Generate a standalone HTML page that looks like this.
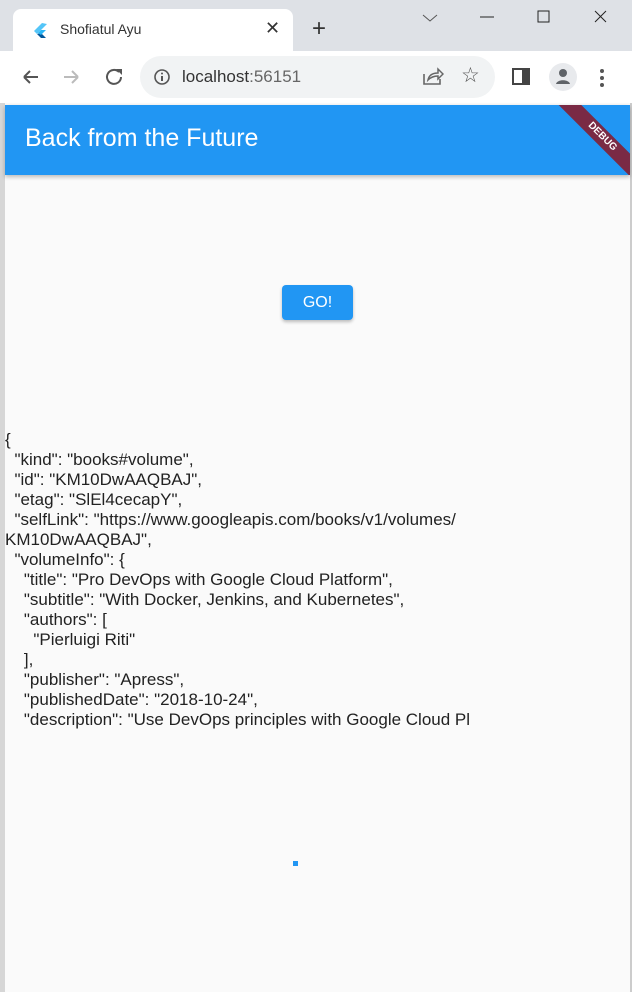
<!DOCTYPE html>
<html><head><meta charset="utf-8"><style>
*{margin:0;padding:0;box-sizing:border-box}
body{width:632px;height:992px;overflow:hidden;background:#fafafa;font-family:"Liberation Sans",sans-serif;position:relative}
.tabbar{position:absolute;left:0;top:0;width:632px;height:51px;background:#dee1e6}
.tab{position:absolute;left:13px;top:9px;width:280px;height:42px;background:#fff;border-radius:8px 8px 0 0}
.toolbar{position:absolute;left:0;top:51px;width:632px;height:52px;background:#fff}
.omni{position:absolute;left:140px;top:56px;width:355px;height:42px;background:#f1f3f4;border-radius:21px}
.appbar{position:absolute;left:5px;top:105px;width:625px;height:70px;background:#2196f3;box-shadow:0 2px 4px rgba(0,0,0,.25);overflow:hidden}
.json{position:absolute;left:5px;top:430px;font-size:17px;line-height:20px;color:#222;white-space:pre}
</style></head><body>
<div class="tabbar"></div>
<div class="tab">
 <svg style="position:absolute;left:20px;top:14px" width="14" height="16" viewBox="0 0 14 16"><path d="M9 0L1 8l3 3L14 1z" fill="#54c5f8"/><path d="M4 11l4 4h5L8 10z" fill="#01579b"/><path d="M5 10l3-3h5l-5 5z" fill="#29b6f6"/></svg>
 <div style="position:absolute;left:47px;top:12px;font-size:14px;color:#333">Shofiatul Ayu</div>
 <div style="position:absolute;left:252px;top:9px;font-size:18px;color:#333">✕</div>
</div>
<div style="position:absolute;left:312px;top:15px;font-size:24px;color:#333">+</div>
<svg style="position:absolute;left:420px;top:10px" width="200" height="20"><path d="M3 5l7 6 7-6" stroke="#555" fill="none"/><path d="M60 7h14" stroke="#222"/><rect x="118" y="1" width="11" height="11" stroke="#222" fill="none"/><path d="M175 1l11 11M186 1l-11 11" stroke="#222"/></svg>
<div class="toolbar"></div>
<svg style="position:absolute;left:20px;top:66px" width="110" height="22"><path d="M4 11h14M4 11l6-6M4 11l6 6" stroke="#555" stroke-width="2" fill="none"/><path d="M44 11h14M58 11l-6-6M58 11l-6 6" stroke="#bbb" stroke-width="2" fill="none"/><path d="M99 6a7 7 0 1 0 2 5" stroke="#555" stroke-width="2" fill="none"/><path d="M96 3h6v6z" fill="#555"/></svg>
<div class="omni"></div>
<svg style="position:absolute;left:153px;top:68px" width="18" height="18"><circle cx="9" cy="9" r="7" stroke="#555" stroke-width="1.6" fill="none"/><path d="M9 8v5" stroke="#555" stroke-width="2"/><circle cx="9" cy="5.5" r="1" fill="#555"/></svg>
<div style="position:absolute;left:182px;top:67px;font-size:17px;color:#333">localhost<span style="color:#666">:56151</span></div>
<svg style="position:absolute;left:422px;top:66px" width="22" height="20"><path d="M2 8v10h16v-5" stroke="#666" stroke-width="1.6" fill="none"/><path d="M6 14c1-5 5-7 10-7V3l5 5-5 5V10c-4 0-7 1-10 4z" stroke="#666" stroke-width="1.5" fill="none"/></svg>
<div style="position:absolute;left:461px;top:63px;font-size:21px;color:#555">☆</div>
<svg style="position:absolute;left:512px;top:68px" width="20" height="18"><rect x="1" y="1" width="16" height="15" stroke="#444" stroke-width="2" fill="none"/><rect x="10" y="1" width="7" height="15" fill="#444"/></svg>
<svg style="position:absolute;left:548px;top:62px" width="30" height="30"><circle cx="15" cy="15" r="14" fill="#e8eaed"/><circle cx="15" cy="11" r="4" fill="#5f6368"/><path d="M8 22c1-5 13-5 14 0z" fill="#5f6368"/></svg>
<svg style="position:absolute;left:598px;top:68px" width="8" height="20"><circle cx="4" cy="3" r="2" fill="#555"/><circle cx="4" cy="10" r="2" fill="#555"/><circle cx="4" cy="17" r="2" fill="#555"/></svg>
<div style="position:absolute;left:0;top:103px;width:5px;height:889px;background:#d6d6d6"></div>
<div style="position:absolute;left:630px;top:103px;width:2px;height:889px;background:#ccc"></div>
<div class="appbar">
 <div style="position:absolute;left:20px;top:19px;font-size:25px;color:#fff">Back from the Future</div>
 <div style="position:absolute;left:537px;top:24px;width:120px;height:16px;background:#7a2a45;transform:rotate(45deg);color:#fff;font-size:10px;font-weight:bold;text-align:center;line-height:16px">DEBUG</div>
</div>
<div style="position:absolute;left:282px;top:285px;width:71px;height:35px;background:#2196f3;border-radius:4px;box-shadow:0 2px 3px rgba(0,0,0,.25);color:#fff;font-size:16px;text-align:center;line-height:35px">GO!</div>
<div class="json">{
  "kind": "books#volume",
  "id": "KM10DwAAQBAJ",
  "etag": "SlEl4cecapY",
  "selfLink": "https://www.googleapis.com/books/v1/volumes/
KM10DwAAQBAJ",
  "volumeInfo": {
    "title": "Pro DevOps with Google Cloud Platform",
    "subtitle": "With Docker, Jenkins, and Kubernetes",
    "authors": [
      "Pierluigi Riti"
    ],
    "publisher": "Apress",
    "publishedDate": "2018-10-24",
    "description": "Use DevOps principles with Google Cloud Pl</div>
<div style="position:absolute;left:293px;top:861px;width:5px;height:5px;background:#2196f3"></div>
</body></html>
